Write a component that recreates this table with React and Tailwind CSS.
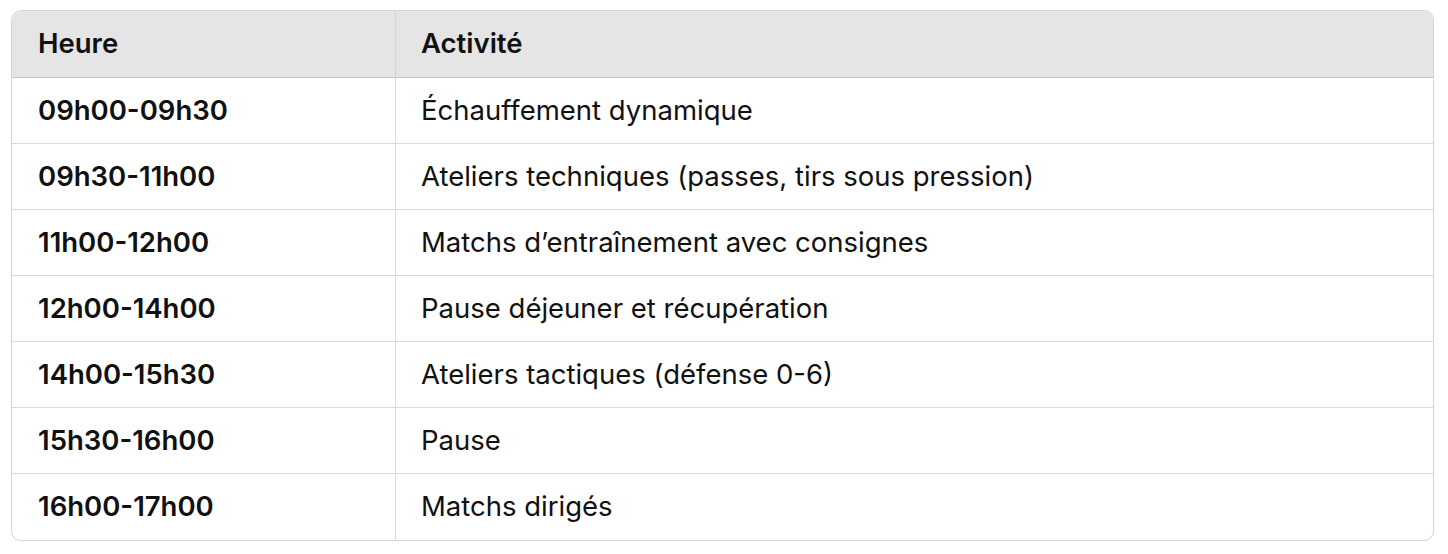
import React from 'react';

const rows = [
  ['09h00-09h30', 'Échauffement dynamique'],
  ['09h30-11h00', 'Ateliers techniques (passes, tirs sous pression)'],
  ['11h00-12h00', 'Matchs d’entraînement avec consignes'],
  ['12h00-14h00', 'Pause déjeuner et récupération'],
  ['14h00-15h30', 'Ateliers tactiques (défense 0-6)'],
  ['15h30-16h00', 'Pause'],
  ['16h00-17h00', 'Matchs dirigés'],
];

const App = () => {
  return (
    <div className="min-h-[554px] bg-white pt-[10px] pl-[11px]" style={{ fontFamily: 'Inter, "Noto Sans", sans-serif' }}>
      <div className="w-[1423px] rounded-[10px] border border-[#d4d4d4] overflow-hidden text-[27.5px] text-[#111]">
        <div className="flex h-[67px] bg-[#e5e5e5] border-b border-[#c6c6c6]">
          <div className="w-[384px] border-r border-[#d4d4d4] flex items-center px-[26px] font-semibold">Heure</div>
          <div className="flex-1 flex items-center px-[25px] font-semibold">Activité</div>
        </div>
        {rows.map(([time, activity], i) => (
          <div
            key={time}
            className={`flex h-[66px] ${i < rows.length - 1 ? 'border-b border-[#dadada]' : ''}`}
          >
            <div className="w-[384px] border-r border-[#dadada] flex items-center px-[26px] font-semibold">{time}</div>
            <div className="flex-1 flex items-center px-[25px]">{activity}</div>
          </div>
        ))}
      </div>
    </div>
  );
};

export default App;
